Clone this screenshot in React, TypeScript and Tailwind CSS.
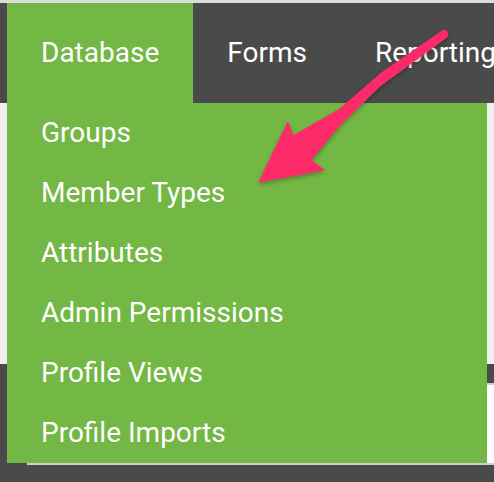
const tabs = ["Database", "Forms", "Reporting"];

const menuItems = [
  "Groups",
  "Member Types",
  "Attributes",
  "Admin Permissions",
  "Profile Views",
  "Profile Imports",
];

function Arrow() {
  return (
    <svg
      className="absolute left-0 top-0 pointer-events-none"
      width={494}
      height={482}
      viewBox="0 0 494 482"
    >
      <defs>
        <filter id="shadow" x="-10%" y="-10%" width="120%" height="130%">
          <feDropShadow dx="0" dy="2" stdDeviation="2" floodColor="#000" floodOpacity="0.3" />
        </filter>
      </defs>
      <path
        d="M442 31 L380 74 L340 109 L293 136 L288 122 L259 182 L324 170 L311 160 L340 125 L380 86 L447 37 Q449 33 446 30.5 Q444 29.5 442 31 Z"
        fill="#fd2a6b"
        stroke="#fd2a6b"
        strokeWidth={1}
        strokeLinejoin="round"
        filter="url(#shadow)"
      />
    </svg>
  );
}

export default function App() {
  return (
    <div className="relative w-[494px] h-[482px] overflow-hidden bg-[#f0f0f0] font-['Roboto',sans-serif]">
      <div className="h-[3px] bg-[#dcdcdc]" />
      <nav className="flex h-[100px] bg-[#4a4a4a] pl-[7px]">
        {tabs.map((tab, i) => (
          <div
            key={tab}
            className={`flex items-center px-[34px] text-[28px] text-white whitespace-nowrap ${
              i === 0 ? "bg-[#73b744]" : ""
            }`}
          >
            {tab}
          </div>
        ))}
      </nav>
      <div className="h-[261px]" />
      <div className="h-[118px] bg-[#4a4a4a] pt-[19px] pl-[27px]">
        <div className="h-[82px] bg-white border-t-2 border-b-2 border-[#cfcfcf]" />
      </div>

      {/* dropdown */}
      <div className="absolute left-[7px] top-[103px] w-[480px] bg-[#73b744]">
        {menuItems.map((item) => (
          <div
            key={item}
            className="flex items-center h-[60px] px-[34px] text-[28px] text-white"
          >
            {item}
          </div>
        ))}
      </div>

      <Arrow />
    </div>
  );
}
